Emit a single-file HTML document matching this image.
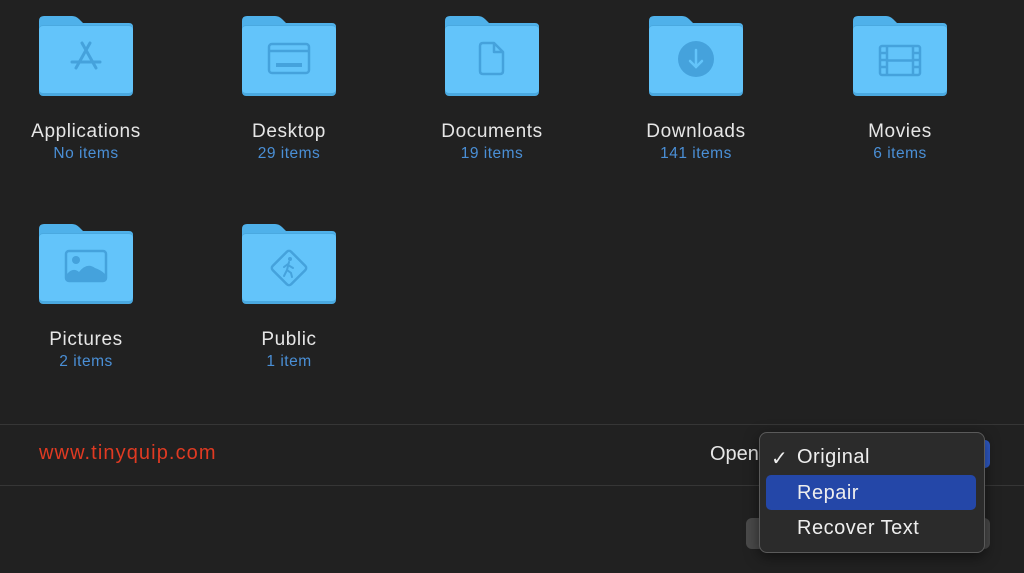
<!DOCTYPE html>
<html><head><meta charset="utf-8"><style>
html,body{margin:0;padding:0;background:#212121;width:1024px;height:573px;overflow:hidden;font-family:"Liberation Sans",sans-serif}
.item{position:absolute;width:200px;text-align:center}
.item svg{display:block;margin:0 auto}
.name{color:#e6e6e6;font-size:19px;margin-top:25px;line-height:22px;letter-spacing:0.6px}
.cnt{color:#4a8fd6;font-size:15.5px;line-height:18px;margin-top:2px;letter-spacing:0.5px}
.line{position:absolute;left:0;width:1024px;height:1px;background:#363636}
</style></head><body>
<svg width="0" height="0" style="position:absolute">
<defs>
<g id="f">
<path d="M0 5 Q0 0 5 0 L33 0 Q37 0 40 3 L44 7 L90 7 Q94 7 94 11 L94 20 L0 20 Z" fill="#4fb1ea"/>
<rect x="0" y="9" width="94" height="71" rx="4" fill="#4aa9e0"/>
<rect x="0" y="10" width="94" height="67" rx="4" fill="#63c4fa"/>
</g>
</defs></svg>

<div class="item" style="left:-14px;top:16px"><svg width="94" height="80"><use href="#f"/><g stroke="#45a2dc" stroke-width="3" fill="none" stroke-linecap="round"><path d="M43 27 L57 52 M51 27 L37 52 M33 46 L61 46"/></g></svg><div class="name">Applications</div><div class="cnt">No items</div></div>
<div class="item" style="left:189px;top:16px"><svg width="94" height="80"><use href="#f"/><g stroke="#45a2dc" stroke-width="2.5" fill="none"><rect x="27" y="28" width="40" height="29" rx="3"/><path d="M27 35 H67"/></g><rect x="34" y="47" width="26" height="4" fill="#45a2dc"/></svg><div class="name">Desktop</div><div class="cnt">29 items</div></div>
<div class="item" style="left:392px;top:16px"><svg width="94" height="80"><use href="#f"/><path d="M38 27 H49 L58 36 V55 Q58 58 55 58 H38 Q35 58 35 55 V30 Q35 27 38 27 Z M49 27 V36 H58" stroke="#45a2dc" stroke-width="2.5" fill="none" stroke-linejoin="round"/></svg><div class="name">Documents</div><div class="cnt">19 items</div></div>
<div class="item" style="left:596px;top:16px"><svg width="94" height="80"><use href="#f"/><circle cx="47" cy="43" r="18" fill="#45a2dc"/><path d="M47 34 V51 M41 45 L47 51 L53 45" stroke="#63c4fa" stroke-width="2.5" fill="none" stroke-linecap="round"/></svg><div class="name">Downloads</div><div class="cnt">141 items</div></div>
<div class="item" style="left:800px;top:16px"><svg width="94" height="80"><use href="#f"/><g stroke="#45a2dc" stroke-width="2.5" fill="none"><rect x="27" y="30" width="40" height="29" rx="2"/><path d="M34 30 V59 M60 30 V59 M34 44.5 H60 M27 37 H34 M27 44 H34 M27 51 H34 M60 37 H67 M60 44 H67 M60 51 H67"/></g></svg><div class="name">Movies</div><div class="cnt">6 items</div></div>

<div class="item" style="left:-14px;top:224px"><svg width="94" height="80"><use href="#f"/><rect x="27" y="27" width="40" height="30" rx="3" stroke="#45a2dc" stroke-width="2.5" fill="none"/><circle cx="37" cy="36" r="4" fill="#45a2dc"/><path d="M28 56 L28 50 Q34 43 40 48 Q48 38 56 44 Q62 46 66 50 L66 56 Z" fill="#45a2dc"/></svg><div class="name">Pictures</div><div class="cnt">2 items</div></div>
<div class="item" style="left:189px;top:224px"><svg width="94" height="80"><use href="#f"/><rect x="34" y="31" width="26" height="26" rx="3" transform="rotate(45 47 44)" stroke="#45a2dc" stroke-width="2.5" fill="none"/><circle cx="48" cy="35" r="2" fill="#45a2dc"/><path d="M47 38 L45 46 L42 52 M45 46 L49 49 L50 53 M46 41 L51 44 M46 40 L42 43" stroke="#45a2dc" stroke-width="2" fill="none" stroke-linecap="round"/></svg><div class="name">Public</div><div class="cnt">1 item</div></div>

<div class="line" style="top:424px"></div>
<div class="line" style="top:485px"></div>
<div style="position:absolute;left:39px;top:442px;color:#e03a22;font-size:20px;letter-spacing:1.1px">www.tinyquip.com</div>
<div style="position:absolute;left:710px;top:443px;color:#e6e6e6;font-size:20px">Open</div>
<div style="position:absolute;left:970px;top:440px;width:20px;height:28px;border-radius:5px;background:#2f5bc9"></div>
<div style="position:absolute;left:746px;top:518px;width:244px;height:31px;border-radius:6px;background:#4a4a4a"></div>
<div style="position:absolute;left:759px;top:432px;width:224px;height:119px;border-radius:8px;background:#2b2b2b;border:1px solid #5a5a5a;box-shadow:0 4px 14px rgba(0,0,0,.5)">
<div style="position:absolute;left:11px;top:13px;color:#eee;font-size:20px">✓</div>
<div style="position:absolute;left:37px;top:13px;color:#eee;font-size:20px;letter-spacing:0.5px">Original</div>
<div style="position:absolute;left:6px;top:42px;width:210px;height:35px;border-radius:5px;background:#2447a8"></div>
<div style="position:absolute;left:37px;top:49px;color:#eee;font-size:20px;letter-spacing:0.5px">Repair</div>
<div style="position:absolute;left:37px;top:84px;color:#eee;font-size:20px;letter-spacing:0.5px">Recover Text</div>
</div>
</body></html>
